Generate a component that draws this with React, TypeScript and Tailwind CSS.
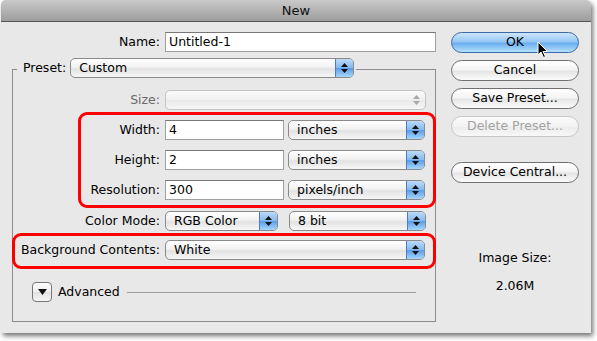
const popupBg = "bg-[linear-gradient(#ffffff,#f1f1f1_45%,#e2e2e2_55%,#f7f7f7)]";

function Arrows({ muted }: { muted?: boolean }) {
  return (
    <svg width="7" height="12" viewBox="0 0 7 12" className={muted ? "fill-[#a8a8a8]" : "fill-[#111]"}>
      <polygon points="3.5,1 7,5 0,5" />
      <polygon points="0,7 7,7 3.5,11" />
    </svg>
  );
}

function Popup({ value, className, disabled }: { value?: string; className: string; disabled?: boolean }) {
  return (
    <div
      className={`${className} h-[20px] flex rounded-[5px] border overflow-hidden ${
        disabled ? "border-[#c4c4c4] bg-[linear-gradient(#fafafa,#f0f0f0_50%,#e9e9e9_51%,#f6f6f6)]" : `border-[#8a8a8a] ${popupBg}`
      }`}
    >
      <div className="flex-1 pl-[8px] leading-[18px] text-black">{value}</div>
      {disabled ? (
        <div className="w-[18px] flex items-center justify-center">
          <Arrows muted />
        </div>
      ) : (
        <div className="w-[18px] flex items-center justify-center border-l border-[#4f7bbd] bg-[linear-gradient(#bcdaf8,#86baf0_48%,#5c9de8_52%,#a6d6fb)]">
          <Arrows />
        </div>
      )}
    </div>
  );
}

function Field({ value, className }: { value: string; className: string }) {
  return (
    <div className={`${className} h-[20px] bg-white border border-[#a0a0a0] border-t-[#777] pl-[3px] leading-[18px] text-black`}>
      {value}
    </div>
  );
}

function Button({ label, primary, disabled }: { label: string; primary?: boolean; disabled?: boolean }) {
  let tone = "border-[#707070] bg-[linear-gradient(#ffffff,#f3f3f3_48%,#e4e4e4_52%,#fbfbfb)] text-black";
  if (primary) tone = "border-[#3c68a8] bg-[linear-gradient(#cfe6fc,#93c5f3_48%,#68acef_52%,#b4e0fd)] text-black";
  if (disabled) tone = "border-[#c6c6c6] bg-[linear-gradient(#fcfcfc,#f2f2f2_50%,#ebebeb_51%,#f8f8f8)] text-[#a3a3a3]";
  return (
    <div className={`h-[21px] w-[128px] rounded-full border ${tone} flex items-center justify-center leading-none`}>
      {label}
    </div>
  );
}

export default function App() {
  return (
    <div className="relative w-[597px] h-[341px] bg-white pl-[1px] font-['DejaVu_Sans',sans-serif] text-[12.5px] text-black">
      <div className="w-[590px] h-[333px] bg-[#e8e8e8] rounded-t-[5px] shadow-[2px_3px_5px_rgba(0,0,0,0.55)] flex flex-col">
        <div className="h-[22px] rounded-t-[5px] border-b border-[#555] bg-[linear-gradient(#c9c9c9,#9d9d9d)] flex items-center justify-center text-[13px] text-[#111]">
          New
        </div>

        <div className="flex pl-[11px]">
          {/* left column */}
          <div className="w-[424px] flex flex-col">
            <div className="mt-[10px] flex items-center">
              <div className="w-[148px] text-right">Name:</div>
              <Field value="Untitled-1" className="ml-[5px] w-[271px]" />
            </div>

            <div className="mt-[17px] border border-[#8c8c8c] pb-[19px] flex flex-col">
              <div className="-mt-[12px] ml-[4px] pl-[6px] pr-[2px] w-fit bg-[#e8e8e8] flex items-center gap-[4px]">
                <span>Preset:</span>
                <Popup value="Custom" className="w-[284px]" />
              </div>

              <div className="mt-[12px] flex items-center">
                <div className="w-[147px] text-right text-[#6a6a6a]">Size:</div>
                <Popup disabled className="ml-[5px] w-[261px]" />
              </div>

              <div className="mt-[2px] ml-[65px] -mr-[1px] border-[3px] border-[#ff0000] rounded-[9px] py-[5px] flex flex-col gap-[10px]">
                <div className="flex items-center">
                  <div className="w-[79px] text-right">Width:</div>
                  <Field value="4" className="ml-[5px] w-[119px]" />
                  <Popup value="inches" className="ml-[4px] w-[137px]" />
                </div>
                <div className="flex items-center">
                  <div className="w-[79px] text-right">Height:</div>
                  <Field value="2" className="ml-[5px] w-[119px]" />
                  <Popup value="inches" className="ml-[4px] w-[137px]" />
                </div>
                <div className="flex items-center">
                  <div className="w-[79px] text-right">Resolution:</div>
                  <Field value="300" className="ml-[5px] w-[119px]" />
                  <Popup value="pixels/inch" className="ml-[4px] w-[137px]" />
                </div>
              </div>

              <div className="mt-[3px] flex items-center">
                <div className="w-[147px] text-right">Color Mode:</div>
                <Popup value="RGB Color" className="ml-[5px] w-[113px]" />
                <Popup value="8 bit" className="ml-[11px] w-[137px]" />
              </div>

              <div className="mt-[2px] -mx-[1px] border-[3px] border-[#ff0000] rounded-[9px] pt-[4px] pb-[6px] flex items-center">
                <div className="w-[145px] text-right">Background Contents:</div>
                <Popup value="White" className="ml-[5px] w-[260px]" />
              </div>

              <div className="mt-[13px] ml-[19px] mr-[19px] flex items-center">
                <div className="w-[20px] h-[20px] rounded-[4px] border border-[#777] bg-[linear-gradient(#ffffff,#eeeeee_50%,#e0e0e0_51%,#f6f6f6)] flex items-center justify-center">
                  <svg width="9" height="6" viewBox="0 0 9 6">
                    <polygon points="0,0 9,0 4.5,6" fill="#111" />
                  </svg>
                </div>
                <span className="ml-[6px]">Advanced</span>
                <div className="ml-[7px] flex-1 h-px bg-[#9a9a9a]" />
              </div>
            </div>
          </div>

          {/* right column */}
          <div className="ml-[15px] pt-[10px] flex flex-col">
            <div className="flex flex-col gap-[7px]">
              <Button label="OK" primary />
              <Button label="Cancel" />
              <Button label="Save Preset..." />
              <Button label="Delete Preset..." disabled />
            </div>
            <div className="mt-[25px]">
              <Button label="Device Central..." />
            </div>
            <div className="mt-[66px] w-[128px] flex flex-col items-center gap-[9px]">
              <span>Image Size:</span>
              <span>2.06M</span>
            </div>
          </div>
        </div>
      </div>

      {/* mouse pointer over OK */}
      <svg className="absolute left-[537px] top-[41px]" width="12" height="18" viewBox="0 0 12 18">
        <path d="M1 1 L1 14 L4 11 L6.5 16.5 L8.5 15.5 L6 10.5 L10.5 10.5 Z" fill="#000" stroke="#fff" strokeWidth="1" />
      </svg>
    </div>
  );
}
